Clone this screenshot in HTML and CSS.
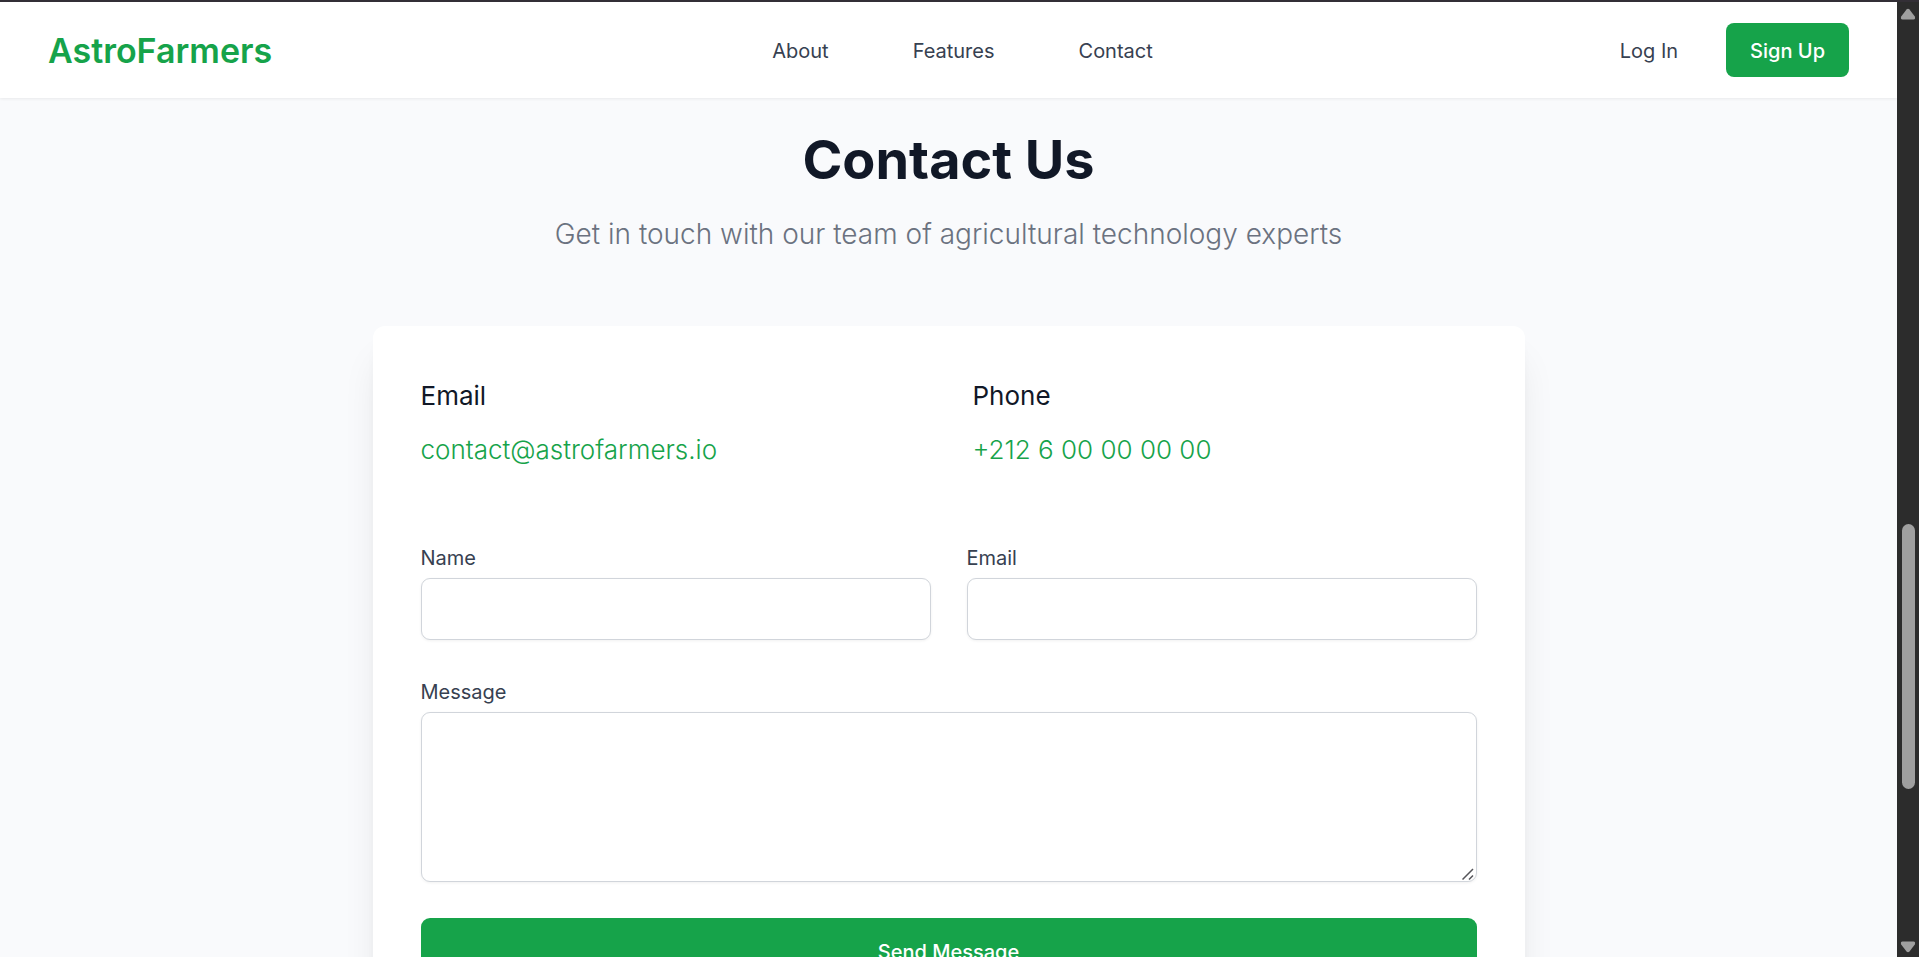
FILE: index.html
```html
<!DOCTYPE html>
<html lang="en">
<head>
<meta charset="utf-8">
<title>AstroFarmers</title>
<link rel="stylesheet" href="styles.css">
</head>
<body>
<div class="window">
  <div class="page">
    <header class="header">
      <a class="logo" href="#home">AstroFarmers</a>
      <nav class="nav">
        <a class="nav-link" href="#about">About</a>
        <a class="nav-link" href="#features">Features</a>
        <a class="nav-link" href="#contact">Contact</a>
      </nav>
      <div class="account">
        <a class="nav-link" href="#login">Log In</a>
        <a class="signup" href="#signup">Sign Up</a>
      </div>
    </header>
    <main class="contact" id="contact">
      <h1 class="title">Contact Us</h1>
      <p class="subtitle">Get in touch with our team of agricultural technology experts</p>
      <section class="card">
        <div class="info">
          <div>
            <h2 class="info-title">Email</h2>
            <a class="info-link" href="mailto:contact@astrofarmers.io">contact@astrofarmers.io</a>
          </div>
          <div>
            <h2 class="info-title">Phone</h2>
            <a class="info-link" href="tel:+212600000000">+212 6 00 00 00 00</a>
          </div>
        </div>
        <form class="form">
          <div class="row">
            <div class="field">
              <label class="label" for="name">Name</label>
              <input class="input" id="name" type="text">
            </div>
            <div class="field">
              <label class="label" for="email">Email</label>
              <input class="input" id="email" type="email">
            </div>
          </div>
          <div class="field">
            <label class="label" for="message">Message</label>
            <textarea class="input message" id="message"></textarea>
            <svg class="grip" viewBox="0 0 12 12" aria-hidden="true"><path d="M.5 11.500L11 1M7 11.500L11 7.500"/></svg>
          </div>
          <button class="send" type="submit">Send Message</button>
        </form>
      </section>
    </main>
  </div>
  <div class="scrollbar" aria-hidden="true">
    <svg class="arrow" viewBox="0 0 16 12"><path d="M6.500 1.500Q8 0 9.500 1.500L14.800 8.500Q15.800 11.500 13.500 11.500H2.500Q.2 11.500 1.200 8.500Z"/></svg>
    <div class="track"><div class="thumb"></div></div>
    <svg class="arrow" viewBox="0 0 16 12"><path d="M6.500 10.500Q8 12 9.500 10.500L14.800 3.500Q15.800 .5 13.500 .5H2.500Q.2 .5 1.200 3.500Z"/></svg>
  </div>
</div>
</body>
</html>
```
FILE: styles.css
```css
* { box-sizing: border-box; }

body {
  margin: 0;
  font-family: Inter, "Liberation Sans", sans-serif;
  color: #111827;
  background: #f9fafb;
}

a { text-decoration: none; }

.window {
  display: flex;
  height: 100vh;
  overflow: hidden;
  border-top: 2px solid #332f36;
}

.page {
  flex: 1;
  min-width: 0;
  overflow: hidden;
  background: #f9fafc;
}

.header {
  display: grid;
  grid-template-columns: 1fr auto 1fr;
  align-items: center;
  height: 96px;
  padding: 0 48px;
  background: #fff;
  box-shadow: 0 1px 3px rgba(0, 0, 0, 0.07);
}

.logo {
  padding-top: 2px;
  font-size: 34px;
  line-height: 48px;
  font-weight: 600;
  color: #16a34a;
}

.nav {
  display: flex;
  gap: 84px;
  padding-left: 28px;
}

.nav-link {
  padding-top: 2px;
  font-size: 20px;
  line-height: 30px;
  color: #374151;
}

.account {
  display: flex;
  justify-content: flex-end;
  align-items: center;
  gap: 48px;
}

.signup {
  padding: 13px 24px 11px;
  border-radius: 8px;
  font-size: 20px;
  line-height: 30px;
  font-weight: 500;
  color: #fff;
  background: #16a34a;
}

.contact {
  padding: 32px 48px 96px;
}

.title {
  margin: 0;
  text-align: center;
  font-size: 54px;
  line-height: 60px;
  font-weight: 700;
}

.subtitle {
  margin: 24px 0 72px;
  text-align: center;
  font-size: 28px;
  line-height: 40px;
  font-weight: 300;
  color: #6b7280;
}

.card {
  max-width: 1152px;
  margin: 0 auto;
  padding: 48px;
  border-radius: 12px;
  background: #fff;
  box-shadow: 0 30px 38px -8px rgba(0, 0, 0, 0.1), 0 12px 15px -9px rgba(0, 0, 0, 0.1);
}

.info {
  display: grid;
  grid-template-columns: 1fr 1fr;
  gap: 48px;
  margin-bottom: 70px;
}

.info-title {
  margin: 0 0 10px;
  font-size: 26px;
  line-height: 44px;
  font-weight: 400;
}

.info-link {
  display: block;
  font-size: 26px;
  line-height: 44px;
  font-weight: 300;
  color: #16a34a;
}

.form {
  display: grid;
  gap: 36px;
}

.row {
  display: grid;
  grid-template-columns: 1fr 1fr;
  gap: 36px;
}

.field {
  position: relative;
  display: grid;
  gap: 4px;
}

.label {
  font-size: 20px;
  line-height: 32px;
  color: #374151;
}

.input {
  width: 100%;
  height: 62px;
  padding: 12px 16px;
  border: 1px solid #d1d5db;
  border-radius: 9px;
  background: #fff;
  font: inherit;
  font-size: 20px;
  box-shadow: 0 1px 3px rgba(0, 0, 0, 0.06);
}

.message {
  height: 170px;
  resize: vertical;
}

.message::-webkit-resizer {
  display: none;
}

.grip {
  position: absolute;
  right: 3px;
  bottom: 2px;
  width: 12px;
  height: 12px;
  fill: none;
  stroke: #55555a;
  stroke-width: 1.5;
  pointer-events: none;
}

.send {
  padding: 19px 24px;
  border: 0;
  border-radius: 9px;
  font: inherit;
  font-size: 20px;
  line-height: 30px;
  font-weight: 500;
  color: #fff;
  background: #16a34a;
}

.scrollbar {
  display: flex;
  flex-direction: column;
  align-items: center;
  width: 22px;
  padding: 6px 0 4px;
  background: #2c2c2c;
}

.arrow {
  width: 16px;
  height: 12px;
  fill: #9f9f9f;
}

.track {
  flex: 1;
  width: 13px;
  padding-top: 504px;
}

.thumb {
  height: 265px;
  border-radius: 7px;
  background: #9f9f9f;
}
```
